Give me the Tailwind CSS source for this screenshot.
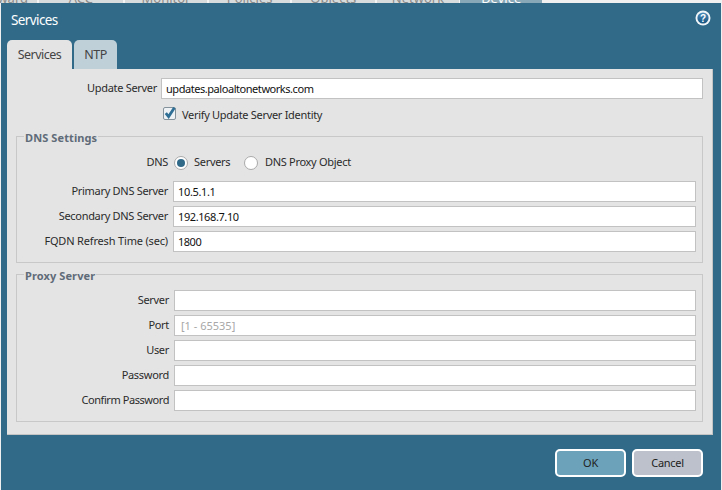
<!DOCTYPE html>
<html lang="en">
<head>
    <meta charset="UTF-8">
    <title>Services</title>
    <script src="https://cdn.jsdelivr.net/npm/@tailwindcss/browser@4"></script>
</head>
<body class="w-[722px] h-[490px] overflow-hidden bg-[#f0f0f0] font-['Noto_Sans','Liberation_Sans',sans-serif] text-[11px] tracking-[-0.3px] text-[#2b2b2b]">
    <!-- Main nav peeking out behind the dialog -->
    <div class="flex gap-[2px] h-[3px] w-[542px] overflow-hidden bg-[#f4f4f4] text-[#8a8a8a] text-[13px] leading-[14px] tracking-normal">
        <div class="w-[37px] bg-[#d8dcdc] flex justify-end items-end pr-[9px]"><span class="-mb-[2px]">ward</span></div>
        <div class="w-[84px] bg-[#d8dcdc] flex justify-center items-end"><span class="-mb-[2px]">ACC</span></div>
        <div class="w-[83px] bg-[#d8dcdc] flex justify-center items-end"><span class="-mb-[2px]">Monitor</span></div>
        <div class="w-[81px] bg-[#d8dcdc] flex justify-center items-end"><span class="-mb-[2px]">Policies</span></div>
        <div class="w-[83px] bg-[#d8dcdc] flex justify-center items-end"><span class="-mb-[2px]">Objects</span></div>
        <div class="w-[83px] bg-[#d8dcdc] flex justify-center items-end"><span class="-mb-[2px]">Network</span></div>
        <div class="w-[82px] -ml-px bg-[#88a8b8] text-white flex justify-center items-end"><span class="-mb-[2px]">Device</span></div>
    </div>

    <!-- Dialog -->
    <div class="ml-px mr-px h-[487px] bg-[#316a89] flex flex-col">
        <div class="flex items-start justify-between h-[37px] pt-[7px] pl-[10px] pr-[10px]">
            <span class="text-[13.5px] leading-[20px] text-white tracking-[-0.6px]">Services</span>
            <svg width="16" height="16" viewBox="0 0 16 16">
                <defs>
                    <linearGradient id="helpFill" x1="0" y1="0" x2="0" y2="1">
                        <stop offset="0" stop-color="#4f8fbd"/>
                        <stop offset="1" stop-color="#14527f"/>
                    </linearGradient>
                </defs>
                <circle cx="8" cy="8" r="7.5" fill="#f2f6f8"/>
                <circle cx="8" cy="8" r="5.6" fill="url(#helpFill)"/>
                <text x="8" y="11.5" text-anchor="middle" font-size="10" font-weight="700" fill="#fff" font-family="Liberation Sans">?</text>
            </svg>
        </div>

        <!-- Tabs -->
        <div class="flex gap-[2px] pl-[6px] h-[29px]">
            <div class="w-[65px] pt-px rounded-t-[5px] bg-[#e4e4e4] flex items-center justify-center text-[12.5px] tracking-[-0.5px] text-[#444]">Services</div>
            <div class="w-[43px] pt-px rounded-t-[5px] bg-[#bfd0d8] flex items-center justify-center text-[12.5px] tracking-[-0.5px] text-[#444]">NTP</div>
        </div>

        <!-- Panel -->
        <div class="ml-[6px] w-[706px] h-[366px] bg-[#e4e4e4] border-r border-b border-[#c4c4c4] pt-[9px]">
            <div class="flex items-center h-[21px]">
                <label class="w-[150px] text-right">Update Server</label>
                <input type="text" value="updates.paloaltonetworks.com" class="w-[542px] ml-[4px] h-[21px] px-[4px] bg-white border border-[#c2c2c2] text-[#111] tracking-[-0.45px] outline-none">
            </div>
            <label class="flex items-center gap-[6px] mt-[8px] ml-[156px] h-[13px]">
                <span class="w-[13px] h-[13px] bg-[#eef2f5] border border-[#84929c] rounded-[2px]">
                    <svg class="overflow-visible" width="11" height="11" viewBox="0 0 11 11"><path d="M1.8 5.2 L4.6 8.6 L10.4 -0.2" fill="none" stroke="#2f6f96" stroke-width="2.8"/></svg>
                </span>
                <span class="pt-[3px]">Verify Update Server Identity</span>
            </label>

            <!-- DNS Settings -->
            <div class="relative ml-[9px] w-[687px] h-[127px] mt-[16px] border border-[#c8c8c8] pt-[17px]">
                <span class="absolute left-[7px] -top-[6px] px-px bg-[#e4e4e4] font-bold text-[#5f6b78] leading-[14px] tracking-[0.1px]">DNS Settings</span>
                <div class="flex items-center h-[17px]">
                    <span class="w-[151px] text-right">DNS</span>
                    <span class="ml-[6px] w-[14px] h-[14px] rounded-full bg-white border border-[#aaa] flex items-center justify-center">
                        <span class="w-[8px] h-[8px] rounded-full bg-[#316a89]"></span>
                    </span>
                    <span class="ml-[6px] w-[36px]">Servers</span>
                    <span class="ml-[14px] w-[14px] h-[14px] rounded-full bg-white border border-[#aaa]"></span>
                    <span class="ml-[7px]">DNS Proxy Object</span>
                </div>
                <div class="flex flex-col gap-[4px] mt-[10px]">
                    <div class="flex items-center">
                        <label class="w-[152px] pr-px text-right">Primary DNS Server</label>
                        <input type="text" value="10.5.1.1" class="ml-[4px] w-[523px] h-[21px] px-[4px] bg-white border border-[#c2c2c2] text-[#111] tracking-[-0.35px] outline-none">
                    </div>
                    <div class="flex items-center">
                        <label class="w-[152px] pr-px text-right">Secondary DNS Server</label>
                        <input type="text" value="192.168.7.10" class="ml-[4px] w-[523px] h-[21px] px-[4px] bg-white border border-[#c2c2c2] text-[#111] tracking-[-0.4px] outline-none">
                    </div>
                    <div class="flex items-center">
                        <label class="w-[152px] pr-px text-right tracking-[-0.17px]">FQDN Refresh Time (sec)</label>
                        <input type="text" value="1800" class="ml-[4px] w-[523px] h-[21px] px-[4px] bg-white border border-[#c2c2c2] text-[#111] tracking-[-0.5px] outline-none">
                    </div>
                </div>
            </div>

            <!-- Proxy Server -->
            <div class="relative ml-[9px] w-[687px] h-[148px] mt-[11px] border border-[#c8c8c8] pt-[15px]">
                <span class="absolute left-[7px] -top-[6px] px-px bg-[#e4e4e4] font-bold text-[#5f6b78] leading-[14px] tracking-[0.1px]">Proxy Server</span>
                <div class="flex flex-col gap-[4px]">
                    <div class="flex items-center">
                        <label class="w-[153px] pr-px text-right">Server</label>
                        <input type="text" class="ml-[4px] w-[522px] h-[21px] px-[6px] bg-white border border-[#c2c2c2] outline-none">
                    </div>
                    <div class="flex items-center">
                        <label class="w-[153px] pr-px text-right">Port</label>
                        <input type="text" placeholder="[1 - 65535]" class="ml-[4px] w-[522px] h-[21px] px-[6px] bg-white border border-[#c2c2c2] tracking-normal placeholder:text-[#a8a8a8] outline-none">
                    </div>
                    <div class="flex items-center">
                        <label class="w-[153px] pr-px text-right">User</label>
                        <input type="text" class="ml-[4px] w-[522px] h-[21px] px-[6px] bg-white border border-[#c2c2c2] outline-none">
                    </div>
                    <div class="flex items-center">
                        <label class="w-[153px] pr-px text-right">Password</label>
                        <input type="password" class="ml-[4px] w-[522px] h-[21px] px-[6px] bg-white border border-[#c2c2c2] outline-none">
                    </div>
                    <div class="flex items-center">
                        <label class="w-[153px] pr-px text-right tracking-[-0.43px]">Confirm Password</label>
                        <input type="password" class="ml-[4px] w-[522px] h-[21px] px-[6px] bg-white border border-[#c2c2c2] outline-none">
                    </div>
                </div>
            </div>
        </div>

        <!-- Footer buttons -->
        <div class="flex justify-end gap-[6px] mt-[14px] pr-[18px]">
            <button class="w-[71px] h-[28px] rounded-[5px] border-2 border-white bg-[#6ca2ba] text-[#222]">OK</button>
            <button class="w-[71px] h-[28px] rounded-[5px] border-2 border-white bg-[#bdc1cb] text-[#222]">Cancel</button>
        </div>
    </div>
</body>
</html>
